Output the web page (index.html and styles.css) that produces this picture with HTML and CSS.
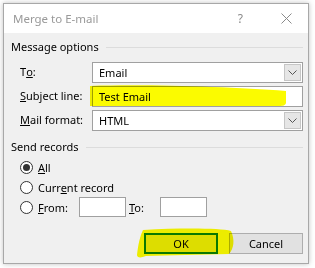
FILE: index.html
```html
<!DOCTYPE html>
<html lang="en">
<head>
  <meta charset="UTF-8">
  <title>Merge to E-mail</title>
  <link rel="stylesheet" href="styles.css">
</head>
<body>
  <div class="dialog">
    <div class="titlebar">
      <span class="title">Merge to E-mail</span>
      <span class="help">?</span>
      <svg class="close" width="11" height="11" viewBox="0 0 11 11">
        <path d="M0.5 0.5 L10.5 10.5 M10.5 0.5 L0.5 10.5" stroke="#8a8a8a" stroke-width="1" fill="none"/>
      </svg>
    </div>

    <div class="content">
      <div class="group-head">Message options</div>
      <div class="form-grid">
        <label>T<u>o</u>:</label>
        <div class="combo">
          <span class="value">Email</span>
          <span class="drop"><svg width="9" height="5" viewBox="0 0 9 5"><path d="M0.5 0.5 L4.5 4.5 L8.5 0.5" stroke="#555" fill="none"/></svg></span>
        </div>

        <label><u>S</u>ubject line:</label>
        <div class="field"><span class="value">Test Email</span></div>

        <label><u>M</u>ail format:</label>
        <div class="combo">
          <span class="value">HTML</span>
          <span class="drop"><svg width="9" height="5" viewBox="0 0 9 5"><path d="M0.5 0.5 L4.5 4.5 L8.5 0.5" stroke="#555" fill="none"/></svg></span>
        </div>
      </div>

      <div class="group-head send-head">Send records</div>
      <div class="radios">
        <div class="radio-row">
          <span class="radio checked"></span><span><u>A</u>ll</span>
        </div>
        <div class="radio-row">
          <span class="radio"></span><span>Curr<u>e</u>nt record</span>
        </div>
        <div class="radio-row">
          <span class="radio"></span><span class="from-label"><u>F</u>rom:</span>
          <span class="small-box"></span>
          <span class="to-label"><u>T</u>o:</span>
          <span class="small-box"></span>
        </div>
      </div>

      <div class="buttons">
        <button class="btn default">OK</button>
        <button class="btn">Cancel</button>
      </div>
    </div>
  </div>

  <!-- marker highlights drawn over the screenshot -->
  <svg class="marker" width="315" height="268" viewBox="0 0 315 268">
    <path d="M90 86 C 150 84, 230 87, 286 91 L 286 103 C 285 106, 282 106, 278 106 L 90 106 Z" fill="#fbfb00"/>
    <path d="M143 230 C 180 228, 220 228, 231 231 C 235 240, 234 248, 229 254 C 200 255, 170 255, 146 256 C 141 258, 137 258, 137 255 C 138 245, 140 236, 143 230 Z" fill="#fbfb00"/>
  </svg>
</body>
</html>
```

FILE: styles.css
```css
body {
  margin: 0;
  background: #fff;
  font-family: "Noto Sans", "Open Sans", sans-serif;
  font-size: 11px;
  color: #000;
  position: relative;
  width: 315px;
  height: 268px;
  overflow: hidden;
}

.dialog {
  margin: 3px 0 0 3px;
  width: 304px;
  height: 259px;
  border: 1px solid #a8a8a8;
  box-shadow: 0 0 5px rgba(0, 0, 0, 0.25);
  background: #f0f0f0;
  display: flex;
  flex-direction: column;
}

.titlebar {
  height: 29px;
  background: #fff;
  display: flex;
  align-items: center;
  padding-left: 9px;
  flex-shrink: 0;
}

.title {
  color: #999;
  font-size: 11.5px;
  flex-grow: 1;
}

.help {
  color: #8a8a8a;
  font-size: 12px;
  margin-right: 38px;
}

.close {
  margin-right: 16px;
}

.content {
  padding: 6px 5px 0 7px;
}

.group-head {
  display: flex;
  align-items: center;
  height: 16px;
  line-height: 16px;
}

.group-head::after {
  content: "";
  flex-grow: 1;
  height: 1px;
  background: #dcdcdc;
  margin-left: 7px;
}

.form-grid {
  margin-top: 7px;
  display: grid;
  grid-template-columns: 72px 1fr;
  grid-auto-rows: 21px;
  row-gap: 3px;
  padding-left: 9px;
}

.form-grid label {
  display: flex;
  align-items: center;
  margin-top: -3px;
}

.combo, .field {
  background: #fff;
  border: 1px solid #a0a0a0;
  display: flex;
  align-items: center;
}

.value {
  flex-grow: 1;
  padding-left: 6px;
}

.drop {
  width: 15px;
  align-self: stretch;
  margin: 1px;
  background: #e6e6e6;
  border: 1px solid #c6c6c6;
  display: flex;
  align-items: center;
  justify-content: center;
}

.send-head {
  margin-top: 8px;
}

.radios {
  margin-top: 2px;
  padding-left: 9px;
}

.radio-row {
  height: 20px;
  display: flex;
  align-items: center;
}

.radio {
  width: 11px;
  height: 11px;
  border: 1px solid #333;
  border-radius: 50%;
  background: #fff;
  margin-right: 5px;
  display: flex;
  align-items: center;
  justify-content: center;
}

.radio.checked::after {
  content: "";
  width: 7px;
  height: 7px;
  border-radius: 50%;
  background: #333;
}

.from-label {
  width: 41px;
}

.to-label {
  width: 34px;
  padding-left: 3px;
  box-sizing: border-box;
}

.small-box {
  width: 45px;
  height: 18px;
  background: #fff;
  border: 1px solid #a0a0a0;
}

.buttons {
  margin-top: 16px;
  display: flex;
  justify-content: flex-end;
  gap: 11px;
}

.btn {
  width: 74px;
  height: 21px;
  font-family: inherit;
  font-size: 11px;
  background: #e1e1e1;
  border: 1px solid #adadad;
  padding: 0;
  color: #000;
}

.btn.default {
  border: 2px solid #0a7a12;
}

.marker {
  position: absolute;
  top: 0;
  left: 0;
  pointer-events: none;
  mix-blend-mode: multiply;
}
```
